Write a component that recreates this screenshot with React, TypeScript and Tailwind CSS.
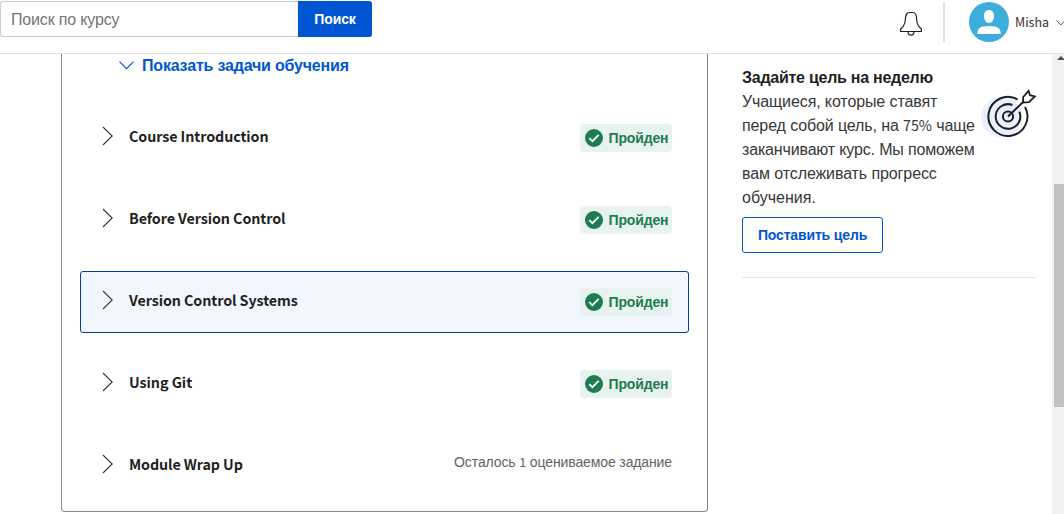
import type { ReactNode } from "react";

const latin = "font-['Noto_Sans_CJK_SC',sans-serif]";

type Lesson = { title: string; done: boolean; active?: boolean; spacing: string };

const lessons: Lesson[] = [
  { title: "Course Introduction", done: true, spacing: "tracking-[-0.09px]" },
  { title: "Before Version Control", done: true, spacing: "tracking-[-0.09px]" },
  { title: "Version Control Systems", done: true, active: true, spacing: "tracking-[-0.09px]" },
  { title: "Using Git", done: true, spacing: "tracking-[-0.05px]" },
  { title: "Module Wrap Up", done: false, spacing: "tracking-[-0.1px]" },
];

function Chevron() {
  return (
    <svg className="h-[20px] w-[12px] shrink-0" viewBox="0 0 12 20" fill="none" stroke="#333" strokeWidth="1.1">
      <path d="M1 1 L10.2 10 L1 19" />
    </svg>
  );
}

function DoneBadge() {
  return (
    <span className="flex h-7 w-[92px] items-center rounded-[4px] bg-[#e8f2ee] pl-[5px]">
      <svg className="size-[18px] shrink-0" viewBox="0 0 18 18" fill="none">
        <circle cx="9" cy="9" r="9" fill="#1d7c50" />
        <path d="M4.3 9.2 L7.4 12.2 L13.7 5.9" stroke="#fff" strokeWidth="1.8" />
      </svg>
      <span className="ml-[5.5px] text-[14px] leading-5 font-bold tracking-[-0.15px] text-[#1d7c50]">Пройден</span>
    </span>
  );
}

function LessonRow({ lesson }: { lesson: Lesson }) {
  return (
    <li
      className={`flex h-[62px] rounded-[3px] border pr-4 pl-[21px] ${
        lesson.active ? "border-[#00419e] bg-[#f2f7ff]" : "border-transparent"
      }`}
    >
      <div className="flex h-[56px] grow items-center">
        <Chevron />
        <span className={`ml-[15px] text-[14.3px] font-bold text-[#1f1f1f] ${latin} ${lesson.spacing}`}>
          {lesson.title}
        </span>
      </div>
      {lesson.done ? (
        <div className="pt-4">
          <DoneBadge />
        </div>
      ) : (
        <span className="mt-4 text-[14px] leading-5 tracking-[-0.12px] whitespace-nowrap text-[#636363]">
          Осталось <span className={`text-[12.5px] leading-none ${latin}`}>1</span> оцениваемое задание
        </span>
      )}
    </li>
  );
}

function Line({ children, spacing }: { children: ReactNode; spacing: string }) {
  return <span className={`block whitespace-nowrap ${spacing}`}>{children}</span>;
}

function Header() {
  return (
    <header className="flex h-[54px] shrink-0 items-start border-b border-[#e1e1e1] bg-white">
      <div className="mt-px flex h-9 w-[372px]">
        <div className="flex w-[298px] items-center rounded-l-[3px] border border-r-0 border-[#c7cfdb] pt-[2px] pl-[10px] text-[16px] tracking-[-0.17px] text-[#757575]">
          Поиск по курсу
        </div>
        <button className="w-[74px] rounded-r-[3px] bg-[#0056d2] text-[14px] font-bold tracking-[-0.1px] text-white">Поиск</button>
      </div>
      <svg className="mt-[11px] ml-[528px] h-[26px] w-[22px] shrink-0" viewBox="0 0 22 26" fill="none" stroke="#222" strokeWidth="1.2">
        <path d="M.6 20.5 V18 L3.2 15.4 C4.8 13.2 5.4 11 5.4 8 C5.4 3.8 7.4 1.5 9.6 1.5 H12.4 C14.6 1.5 16.6 3.8 16.6 8 C16.6 11 17.2 13.2 18.8 15.4 L21.4 18 V20.5 Z" />
        <path d="M8 20.8 C8 25.2 14 25.2 14 20.8" />
      </svg>
      <div className="mt-[2px] ml-[21px] h-10 w-[2px] shrink-0 bg-[#e1e1e1]" />
      <svg className="mt-[2px] ml-[24px] size-10 shrink-0" viewBox="0 0 40 40">
        <circle cx="20" cy="20" r="20" fill="#3daedc" />
        <path d="M20 8 C23.4 8 25 10.4 25 14 C25 18.2 23 21 20 21 S15 18.2 15 14 C15 10.4 16.6 8 20 8 Z" fill="#fff" />
        <path d="M8.3 32 C8.3 27.5 10.5 25.3 14 24.5 C18 23.7 22 23.7 26 24.5 C29.5 25.3 31.7 27.5 31.7 32 Z" fill="#fff" />
      </svg>
      <span className={`mt-[12px] ml-[6px] w-[34px] text-[12.5px] leading-5 tracking-[0px] text-[#333] ${latin}`}>Misha</span>
      <svg className="mt-[19px] ml-[7px] h-2 w-[8px] shrink-0" viewBox="0 0 8 8" fill="none" stroke="#555" strokeWidth="1">
        <path d="M.5 1.5 L4.8 6 L9 1.5" />
      </svg>
    </header>
  );
}

function GoalIcon() {
  return (
    <svg className="-mr-[1px] mt-[23px] ml-auto h-[56px] w-[57px] shrink-0" viewBox="0 0 57 56" fill="none" stroke="#1f1f1f" strokeWidth="2">
      <circle cx="21.5" cy="28" r="20.5" fill="#e8f1ff" stroke="none" />
      <path d="M37.6 10.5 A19.5 19.5 0 1 0 45 18" />
      <path d="M32.4 16 A12.3 12.3 0 1 0 39.3 22.6" />
      <circle cx="28" cy="27.5" r="5.1" />
      <path d="M28 27.5 L43.5 12.6" />
      <path d="M43 13.6 L43.2 8 L48.6 1.8 L50 6.2 L54.8 7.4 L49 13.2 Z" strokeWidth="1.8" />
    </svg>
  );
}

export default function App() {
  return (
    <div className="flex h-[514px] w-[1064px] flex-col overflow-hidden bg-white font-['Liberation_Sans',sans-serif] text-[#1f1f1f]">
      <Header />
      <div className="flex min-h-0 grow">
        <section className="ml-[61px] h-[458px] w-[647px] shrink-0 rounded-b-[4px] border border-t-0 border-[#8b8b8b] px-[18px]">
          <div className="flex h-[53px] items-start pl-[39px] text-[#0056d2]">
            <svg className="mt-[7px] h-[9px] w-[15px] shrink-0" viewBox="0 0 15 9" fill="none" stroke="currentColor" strokeWidth="1.2">
              <path d="M.5 .7 L7.5 7.7 L14.5 .7" />
            </svg>
            <span className="ml-[8px] text-[16px] leading-6 font-bold tracking-[-0.19px] whitespace-nowrap">Показать задачи обучения</span>
          </div>
          <ul className="flex flex-col gap-5">
            {lessons.map((lesson) => (
              <LessonRow key={lesson.title} lesson={lesson} />
            ))}
          </ul>
        </section>
        <aside className="ml-[34px] h-[224px] w-[294px] shrink-0 border-b border-[#e5e5e5] pt-[12px] text-[16px] leading-6">
          <div className="flex h-[151px]">
            <div className="w-[236px] shrink-0">
              <h2 className="font-bold tracking-[-0.26px] whitespace-nowrap">Задайте цель на неделю</h2>
              <div className="text-[#373737]">
                <Line spacing="tracking-[-0.11px]">Учащиеся, которые ставят</Line>
                <Line spacing="tracking-[-0.11px]">
                  перед собой цель, на <span className={`text-[14.3px] leading-none ${latin}`}>75%</span> чаще
                </Line>
                <Line spacing="tracking-[-0.16px]">заканчивают курс. Мы поможем</Line>
                <Line spacing="tracking-[-0.1px]">вам отслеживать прогресс</Line>
                <Line spacing="tracking-[0px]">обучения.</Line>
              </div>
            </div>
            <GoalIcon />
          </div>
          <button className="block h-9 w-[141px] rounded-[3px] border border-[#0056d2] text-[14px] leading-5 font-bold tracking-[-0.15px] text-[#0056d2]">
            Поставить цель
          </button>
        </aside>
        <div className="ml-auto flex w-3 flex-col bg-[#f1f1f1] pl-[2px]">
          <svg className="h-[130px] w-[10px] shrink-0" viewBox="0 0 10 130">
            <path d="M3 6 L7 2 L11 6 Z" fill="#505050" />
          </svg>
          <div className="h-[223px] bg-[#c1c1c1]" />
        </div>
      </div>
    </div>
  );
}
